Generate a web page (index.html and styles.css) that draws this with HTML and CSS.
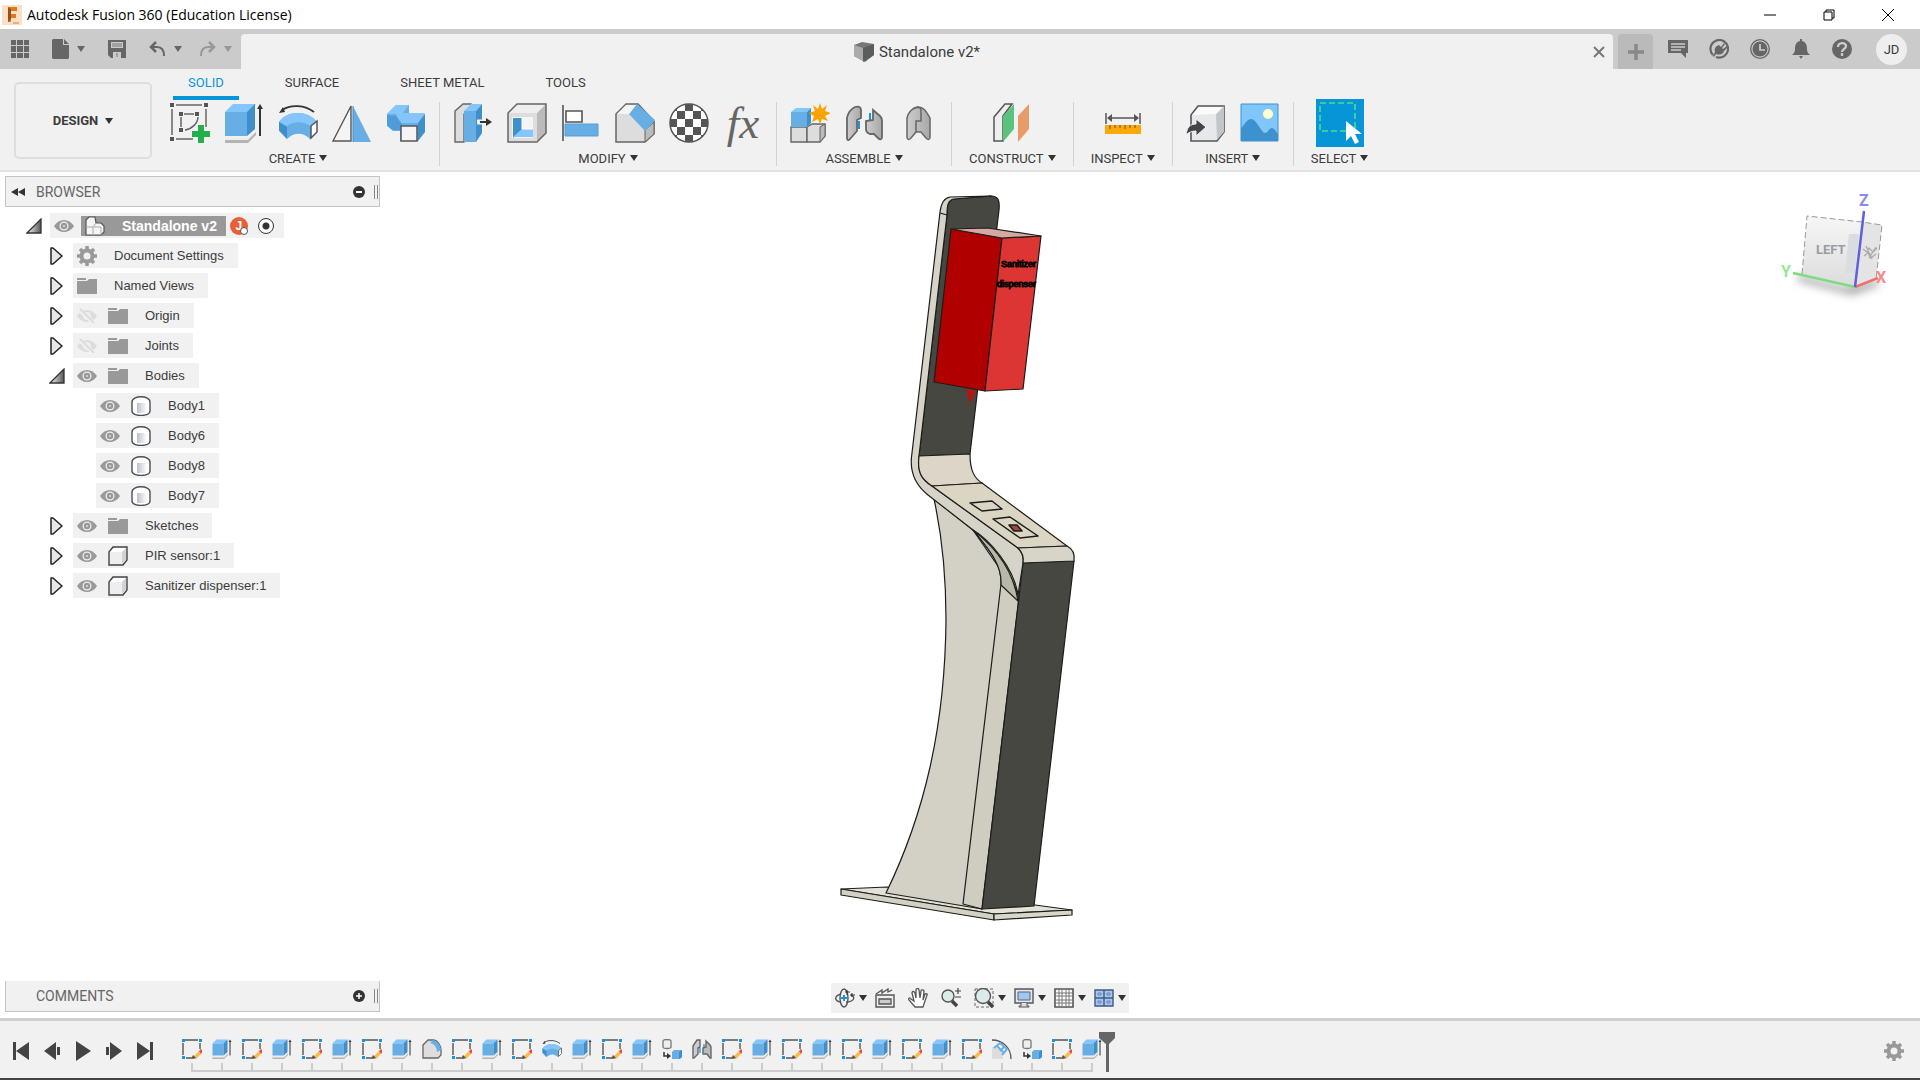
FILE: index.html
```html
<!DOCTYPE html>
<html lang="en">
<head>
    <meta charset="UTF-8">
    <meta name="viewport" content="width=device-width, initial-scale=1.0">
    <title>Autodesk Fusion 360 (Education License)</title>
    <link rel="stylesheet" href="styles.css">
</head>
<body>

    <!-- Icon sprite -->
    <svg class="sprite" aria-hidden="true">
        <defs>
            <linearGradient id="gradBody" x1="0" x2="1"><stop offset="0" stop-color="#bcc2ca"/><stop offset=".6" stop-color="#e4e7ea"/><stop offset="1" stop-color="#fff"/></linearGradient>
            <linearGradient id="gradTri" x1="0" x2="1"><stop offset="0" stop-color="#fff"/><stop offset="1" stop-color="#555"/></linearGradient>
            <linearGradient id="gradSteel" x1="0" x2="1"><stop offset="0" stop-color="#ccc"/><stop offset="1" stop-color="#a8a8a8"/></linearGradient>
            <pattern id="checks" width="16" height="16" patternUnits="userSpaceOnUse" x="0" y="0"><rect width="16" height="16" fill="#fff"/><rect width="8" height="8" fill="#555"/><rect x="8" y="8" width="8" height="8" fill="#555"/></pattern>
        </defs>

        <symbol id="i-sketch" viewBox="0 0 40 40">
            <path d="M6 2h26M2 6v26M6 36h17M36 6v18M14 11h10M11 14v10M15 27c7-1 13-7 13-13" fill="none" stroke="#666" stroke-width="1.5"/>
            <path d="M0 0h4v4H0zM34 0h4v4h-4zM0 34h4v4H0zM9 9h4v4H9zM25 9h4v4h-4zM9 25h4v4H9z" fill="#555"/>
            <path d="M28 22h6v6h6v6h-6v6h-6v-6h-6v-6h6z" fill="#22b04c"/>
        </symbol>
        <symbol id="i-extrude" viewBox="0 0 40 40">
            <path d="M1 35h23l8-8v5l-8 8H1z" fill="#b4b4b4"/><path d="M1 34h23l8-8v3l-8 8H1z" fill="#eee"/>
            <path d="M1 9l8-8h23l-8 8z" fill="#84c5fb"/><path d="M1 9h22v24H1z" fill="#67aee5"/><path d="M23 9l8-8v25l-8 7z" fill="#3f8fcb"/>
            <path d="M36 33V4" stroke="#333" stroke-width="2"/><path d="M33 6l3-5 3 5z" fill="#333"/>
        </symbol>
        <symbol id="i-revolve" viewBox="0 0 40 40">
            <path d="M1 19c8-12 29-12 38 0v10l-7 7c-7-7-16-7-23 0l-8-8z" fill="#67aee5"/><path d="M1 19c8-12 29-12 38 0l-7 4c-7-5-16-5-23 0z" fill="#84c5fb"/><path d="M1 19l8 5v12l-8-9z" fill="#3f8fcb"/>
            <path d="M33 23l6-5v11l-6 6z" fill="#fff" stroke="#555" stroke-width="1.5"/>
            <path d="M36 9C27 2 13 1 4 7" fill="none" stroke="#333" stroke-width="1.7"/><path d="M1 10l4-6 2 5z" fill="#333"/>
        </symbol>
        <symbol id="i-mirror" viewBox="0 0 40 40">
            <path d="M19 3v35H1z" fill="#f4f4f4" stroke="#555" stroke-width="1.4"/><path d="M21 3l18 36H21z" fill="#67aee5"/><path d="M21 3v36" stroke="#3f8fcb"/>
        </symbol>
        <symbol id="i-combine" viewBox="0 0 40 40">
            <path d="M1 11l9-9h13v9h16l-7 10v17H14V28H7l-6-5z" fill="#67aee5"/><path d="M1 11l9-9h13l-6 8h22l-7 10H14l-4-9z" fill="#84c5fb"/><path d="M32 20l7-9v18l-7 9z" fill="#3f8fcb"/><path d="M1 12l9 1 6 8-2 6H7l-6-5z" fill="#4f9cd8"/>
            <path d="M15 23h16v15H15z" fill="#f4f4f4" stroke="#555" stroke-width="1.5"/>
        </symbol>
        <symbol id="i-presspull" viewBox="0 0 40 40">
            <path d="M2 8l8-7h8v5l-7 5v28H2z" fill="#ddd" stroke="#666" stroke-width="1.4"/>
            <path d="M11 8l7-7h11l-6 7z" fill="#84c5fb"/><path d="M11 8h12v31H11z" fill="#67aee5"/><path d="M23 8l6-7v29l-6 9z" fill="#3f8fcb"/>
            <path d="M24 19h11" stroke="#f1f1f1" stroke-width="5"/><path d="M27 19h7" stroke="#333" stroke-width="2"/><path d="M33 15l6 4-6 4z" fill="#333"/>
        </symbol>
        <symbol id="i-shell" viewBox="0 0 40 40">
            <path d="M1 10l9-9h29l-9 9z" fill="#efefef"/><path d="M1 10h29v29H1z" fill="#ddd"/><path d="M30 10l9-9v29l-9 9z" fill="#bbb"/><path d="M1 10l9-9h29v29l-9 9H1z" fill="none" stroke="#666" stroke-width="1.5"/>
            <path d="M5 14h21v21H5z" fill="#f4f4f4"/><path d="M6 15h9v12l-9 8z" fill="#3f8fcb"/><path d="M6 34l9-8h11v8z" fill="#84c5fb"/><path d="M15 15v11h11" fill="none" stroke="#fff"/>
        </symbol>
        <symbol id="i-align" viewBox="0 0 40 40">
            <path d="M2 2v36" stroke="#555" stroke-width="1.6"/><path d="M5 8h16v11H5z" fill="#fff" stroke="#555" stroke-width="1.6"/><path d="M4 21h33v12H4z" fill="#67aee5" stroke="#539fd9"/>
        </symbol>
        <symbol id="i-chamfer" viewBox="0 0 40 40">
            <path d="M1 11l10-10h12l16 17v13l-9 8H1z" fill="#ddd" stroke="#666" stroke-width="1.5"/><path d="M30 27l9-8v12l-9 8z" fill="#bbb" stroke="#666"/><path d="M14 11l8-10 18 16-10 11z" fill="#67aee5"/><path d="M2 11l9-9h10l-7 9z" fill="#f4f4f4"/>
        </symbol>
        <symbol id="i-appearance" viewBox="0 0 40 40">
            <circle cx="20" cy="20" r="19" fill="url(#checks)" stroke="#555" stroke-width="1.5"/>
        </symbol>
        <symbol id="i-newcomp" viewBox="0 0 40 40">
            <path d="M1 24h16v15H1z" fill="#ddd" stroke="#666" stroke-width="1.4"/><path d="M17 24l5-3h13v12l-5 6H17z" fill="#ddd" stroke="#666" stroke-width="1.4"/><path d="M30 24l5-3v12l-5 6z" fill="#bbb" stroke="#666"/>
            <path d="M1 9l5-4h15l-4 4z" fill="#84c5fb"/><path d="M1 9h16v15H1z" fill="#67aee5"/><path d="M17 9l4-4v15l-4 4z" fill="#3f8fcb"/>
            <path d="M30 0l2 6 5-4-2 6 6 2-6 3 3 5-6-2-2 5-2-5-6 3 2-6-5-3 6-2-2-6 5 4z" fill="#f9a300"/>
        </symbol>
        <symbol id="i-joint" viewBox="0 0 40 40">
            <path d="M3 15c1-5 4-9 8-11 4-1 6 0 6 3v8l-4 2v11l-7 8c-2 2-3 1-3-1z" fill="url(#gradSteel)" stroke="#666" stroke-width="1.8"/><path d="M15 18v8M26 10v8" stroke="#1a93e6" stroke-width="2"/>
            <path d="M29 7l7 6c2 2 2 3 2 5v16c0 3-2 3-4 1l-4-4h-4c-3-1-4-3-4-5v-8l7-1z" fill="url(#gradSteel)" stroke="#666" stroke-width="1.8"/>
        </symbol>
        <symbol id="i-asbuilt" viewBox="0 0 40 40">
            <path d="M9 15c1-5 5-10 10-11 6-1 9 4 13 11v19c0 3-2 3-4 1l-5-6h-5l-5 6c-2 2-4 2-4-1z" fill="url(#gradSteel)" stroke="#666" stroke-width="1.5"/><path d="M18 29V18h5V7c0-3-4-3-8-1" fill="none" stroke="#666" stroke-width="1.5"/>
        </symbol>
        <symbol id="i-construct" viewBox="0 0 40 40">
            <path d="M2 14L13 1h7l-9 12v25H2z" fill="#eee" stroke="#555" stroke-width="1.5"/><path d="M11 13L22 1v25L11 39z" fill="#5ac37d"/><path d="M26 13L37 1v25L26 39z" fill="#e89a68"/>
        </symbol>
        <symbol id="i-inspect" viewBox="0 0 40 40">
            <path d="M3 10v11M37 10v11M5 15h30" stroke="#555" stroke-width="1.5"/><path d="M9 11l-5 4 5 4zM31 11l5 4-5 4z" fill="#555"/><path d="M2 22h36v9H2z" fill="#f9a90a"/><path d="M7 22v4M12 22v3M17 22v3M22 22v4M27 22v3M32 22v3" stroke="#765016"/>
        </symbol>
        <symbol id="i-insert" viewBox="0 0 40 40">
            <path d="M5 12l7-9h26v26l-7 9H5z" fill="#e6e8eb" stroke="#555" stroke-width="1.6"/><path d="M30 11l8-8v26l-7 8z" fill="#c2c5ca"/><path d="M6 12l7-8h24l-7 7z" fill="#fafafa"/><path d="M0 32c1-8 4-11 10-11v-5l10 8-10 9v-5c-4 0-7 1-10 4z" fill="#444" stroke="#f1f1f1"/>
        </symbol>
        <symbol id="i-canvas" viewBox="0 0 40 40">
            <path d="M1 1h37v37H1z" fill="#81c6fb" stroke="#3d91cf"/><path d="M1 26c4-6 7-10 10-10 6 0 10 14 14 14 3 0 4-5 7-5 2 0 4 4 6 6v7H1z" fill="#3d91cf"/><circle cx="28" cy="11" r="5" fill="#ffffce"/>
        </symbol>
        <symbol id="i-select" viewBox="0 0 48 48">
            <path d="M4 4h35v28H4z" fill="none" stroke="#4fdc8f" stroke-width="1.6" stroke-dasharray="6 3"/><path d="M30 22v20l5-5 4 8 4-2-4-8h7z" fill="#fff"/>
        </symbol>

        <symbol id="i-eye" viewBox="0 0 20 20"><path d="M0 10c5-8 15-8 20 0-5 8-15 8-20 0z" fill="#999"/><circle cx="10" cy="10" r="4.5" fill="#eee"/><circle cx="10" cy="10" r="3.2" fill="#999"/><circle cx="10" cy="10" r="1" fill="#ddd"/></symbol>
        <symbol id="i-eye-off" viewBox="0 0 20 20"><path d="M0 10c5-8 15-8 20 0-5 8-15 8-20 0z" fill="#ddd"/><circle cx="10" cy="10" r="4" fill="#eee"/><path d="M1 3l17 15" stroke="#f1f1f1" stroke-width="4"/><path d="M3 3l14 14" stroke="#ddd" stroke-width="2"/></symbol>
        <symbol id="i-folder" viewBox="0 0 20 20"><path d="M0 2h9v2H0zM0 5h10l2-2h8v15H0z" fill="#999"/></symbol>
        <symbol id="i-gear" viewBox="0 0 20 20"><g fill="none" stroke="#999"><circle cx="10" cy="10" r="5.5" stroke-width="4"/><path d="M10 0v4M10 16v4M0 10h4M16 10h4M3 3l3 3M14 14l3 3M17 3l-3 3M6 14l-3 3" stroke-width="3.5"/></g></symbol>
        <symbol id="i-body" viewBox="0 0 20 20"><path d="M1 6c0-7 18-7 18 0v9c0 6-18 6-18 0z" fill="#fff" stroke="#4a4f58" stroke-width="1.4"/><path d="M6 7h10v10H6z" fill="url(#gradBody)"/></symbol>
        <symbol id="i-cube" viewBox="0 0 20 20"><path d="M1 6l4-5h14v13l-4 5H1z" fill="#eceef0" stroke="#444" stroke-width="1.4"/><path d="M2 6l4-4h12l-4 4z" fill="#fff"/><path d="M14 6l4-4v12l-4 4z" fill="#cfd2d6"/></symbol>
        <symbol id="i-component" viewBox="0 0 20 20"><path d="M1 4l3-3h6l1 6h5l3 3v6l-3 3H1z" fill="#f3f4f6" stroke="#555" stroke-width="1.2"/><path d="M1 11h7l3-4M8 11v8M9 11h7v8" fill="none" stroke="#aaa"/></symbol>
        <symbol id="i-open" viewBox="0 0 16 16"><path d="M15 1v14H1z" fill="url(#gradTri)" stroke="#333" stroke-width="1.3"/></symbol>
        <symbol id="i-closed" viewBox="0 0 14 18"><path d="M2 1h2l9 8-9 8H2z" fill="#e8e8e8" stroke="#222" stroke-width="1.5" stroke-linejoin="round"/></symbol>

        <symbol id="t-sketch" viewBox="0 0 20 20"><path d="M3 1h13M1 4v12M4 19h7M18 4v6" fill="none" stroke="#555" stroke-width="1.4"/><path d="M0 0h3v3H0zM17 0h3v3h-3zM0 17h3v3H0z" fill="#1a93e6"/><path d="M11 18l6-6 2 3-5 5z" fill="#f9bd48"/><path d="M17 12l2-2 2 2-2 3z" fill="#f04755"/><path d="M10 18l1-2 3 3-3 1z" fill="#555"/></symbol>
        <symbol id="t-copy" viewBox="0 0 20 20"><path d="M1 2c0-2 8-2 8 0v6c0 2-8 2-8 0z" fill="#eee" stroke="#777" stroke-width="1.3"/><path d="M2 13v4h3" fill="none" stroke="#333" stroke-width="1.5"/><path d="M5 14l4 3-4 3z" fill="#333"/><path d="M10 13l2-2h8v7l-2 2h-8z" fill="#67aee5"/><path d="M17 13l3-2v7l-3 2z" fill="#3f8fcb"/></symbol>
        <symbol id="t-fillet" viewBox="0 0 20 20"><path d="M1 6l5-5h5c5 0 8 6 8 10v5l-3 3H1z" fill="#ddd" stroke="#666" stroke-width="1.3"/><path d="M8 4l3-3c5 1 8 6 8 10l-4 2c0-4-2-8-7-9z" fill="#67aee5"/></symbol>
        <symbol id="t-joint" viewBox="0 0 20 20"><path d="M1 7l4-6h3v7L6 9v6l-4 4H1z" fill="#ccc" stroke="#666" stroke-width="1.4"/><path d="M8 9v5M12 5v5" stroke="#1a93e6" stroke-width="1.3"/><path d="M14 2l4 4 1 2v11h-1l-3-4h-4V9l3-1z" fill="#bbb" stroke="#666" stroke-width="1.4"/></symbol>
        <symbol id="t-emboss" viewBox="0 0 20 20"><path d="M0 1c11 0 19 8 19 19" fill="none" stroke="#555" stroke-width="1.3"/><path d="M0 8c7 0 11 5 11 12H0z" fill="#ddd"/><path d="M2 9l6-5 7 6-5 6M5 7l6 6M8 12l4-4" fill="none" stroke="#67aee5" stroke-width="2"/></symbol>
    </svg>

    <header class="title-bar">
        <svg class="app-logo" viewBox="0 0 20 20"><path d="M0 0h20v20H0z" fill="#fbdfc9"/><path d="M6 2h9v4H9v3h5v4H9v4H6z" fill="#d87a20"/><path d="M6 2v15l3-3V4z" fill="#9b4f10"/><path d="M11 17h6v2h-6z" fill="#f3ae70"/></svg>
        <span class="app-name">Autodesk Fusion 360 (Education License)</span>
        <div class="window-controls">
            <button aria-label="Minimize"><svg viewBox="0 0 12 12"><path d="M0 6h12"/></svg></button>
            <button aria-label="Restore"><svg viewBox="0 0 12 12"><path d="M1 3h8v8H1zM3 3V1h8v8H9"/></svg></button>
            <button aria-label="Close"><svg viewBox="0 0 12 12"><path d="M0 0l12 12M12 0L0 12"/></svg></button>
        </div>
    </header>

    <div class="tab-bar">
        <div class="quick-access">
            <button aria-label="Data panel"><svg width="18" height="18" viewBox="0 0 18 18"><path d="M0 0h5v5H0zM6 0h6v5H6zM13 0h5v5h-5zM0 6h5v6H0zM6 6h6v6H6zM13 6h5v6h-5zM0 13h5v5H0zM6 13h6v5H6zM13 13h5v5h-5z" fill="#666"/></svg></button>
            <button class="with-arrow" aria-label="File"><svg width="17" height="20" viewBox="0 0 17 20"><path d="M1 0h10v6h6v13l-1 1H1l-1-1V1zM12 0l5 5h-5z" fill="#666"/></svg><span class="arrow"></span></button>
            <button aria-label="Save"><svg width="18" height="18" viewBox="0 0 18 18"><path d="M0 0h18v18H3l-3-3zM3 2v6h12V2zM5 12v6h8v-6z" fill="#666" fill-rule="evenodd"/><path d="M4 4h10M4 6h10M9 13v4" stroke="#777"/></svg></button>
            <button class="with-arrow" aria-label="Undo"><svg width="17" height="16" viewBox="0 0 17 16"><path d="M2 6h6c5 0 7 4 7 9" fill="none" stroke="#666" stroke-width="2"/><path d="M7 1L2 6l5 5" fill="none" stroke="#666" stroke-width="2.5"/></svg><span class="arrow"></span></button>
            <button class="with-arrow disabled" aria-label="Redo"><svg width="17" height="16" viewBox="0 0 17 16"><path d="M15 6H9c-5 0-7 4-7 9" fill="none" stroke="#666" stroke-width="2"/><path d="M10 1l5 5-5 5" fill="none" stroke="#666" stroke-width="2.5"/></svg><span class="arrow"></span></button>
        </div>
        <div class="document-tab">
            <div class="document-title">
                <svg width="20" height="20" viewBox="0 0 20 20"><path d="M0 3l8-3 12 2v11l-9 7-11-6z" fill="#777"/><path d="M0 3l9 3v13l-9-5z" fill="#aaa"/><path d="M9 6l11-4v11l-11 7z" fill="#5c5c5c"/></svg>
                <span>Standalone v2*</span>
            </div>
            <button class="close-tab" aria-label="Close tab"><svg width="12" height="12" viewBox="0 0 12 12"><path d="M1 1l10 10M11 1L1 11" stroke="#777" stroke-width="2"/></svg></button>
        </div>
        <button class="new-tab" aria-label="New tab"><svg width="16" height="16" viewBox="0 0 16 16"><path d="M8 0v16M0 8h16" stroke="#888" stroke-width="3.5"/></svg></button>
        <div class="account-tools">
            <button aria-label="Comments"><svg viewBox="0 0 20 20"><path d="M0 1h20v13h-2v5l-5-5H0z" fill="#666"/><path d="M3 5h14M3 8h14M3 11h10" stroke="#ccc" stroke-width="1.3"/></svg></button>
            <button aria-label="Extensions"><svg viewBox="0 0 20 20"><path d="M4 16a8.800 8.800 0 1 1 3 2" fill="none" stroke="#666" stroke-width="2.200"/><path d="M4 17l2-4c-1-4 1-6 4-7l2 2 3-4 1 1-3 4 1 1 4-3 1 1-4 4c-1 4-5 4-8 3l-2 3z" fill="#666"/></svg></button>
            <button aria-label="Job status"><svg viewBox="0 0 20 20"><circle cx="10" cy="10" r="9.3" fill="none" stroke="#666" stroke-width="1.3"/><circle cx="10" cy="10" r="7.5" fill="#666"/><path d="M10 5v6h5" fill="none" stroke="#ccc" stroke-width="1.7"/></svg></button>
            <button aria-label="Notifications"><svg viewBox="0 0 20 20"><path d="M9 0h2v2c4 1 5 4 5 8 0 3 1 4 3 6H1c2-2 3-3 3-6 0-4 1-7 5-8zM8 17h4l-2 3z" fill="#666"/></svg></button>
            <button aria-label="Help"><svg viewBox="0 0 20 20"><circle cx="10" cy="10" r="10" fill="#666"/><path d="M6 8c0-5 8-5 8-1 0 3-4 3-4 6M10 14v3" fill="none" stroke="#ccc" stroke-width="2.3"/></svg></button>
            <button class="avatar">JD</button>
        </div>
    </div>

    <!-- Ribbon -->
    <div class="toolbar">
        <button class="workspace-button">DESIGN <span class="arrow"></span></button>
        <div class="ribbon">
            <nav class="ribbon-tabs">
                <button class="active">SOLID</button>
                <button>SURFACE</button>
                <button>SHEET METAL</button>
                <button>TOOLS</button>
            </nav>
            <div class="tool-groups">
                <div class="tool-group">
                    <div class="tools">
                        <button aria-label="Create sketch"><svg><use href="#i-sketch"/></svg></button>
                        <button aria-label="Extrude"><svg><use href="#i-extrude"/></svg></button>
                        <button aria-label="Revolve"><svg><use href="#i-revolve"/></svg></button>
                        <button aria-label="Mirror"><svg><use href="#i-mirror"/></svg></button>
                        <button aria-label="Combine"><svg><use href="#i-combine"/></svg></button>
                    </div>
                    <button class="group-label">CREATE <span class="arrow"></span></button>
                </div>
                <div class="tool-group">
                    <div class="tools">
                        <button aria-label="Press pull"><svg><use href="#i-presspull"/></svg></button>
                        <button aria-label="Shell"><svg><use href="#i-shell"/></svg></button>
                        <button aria-label="Align"><svg><use href="#i-align"/></svg></button>
                        <button aria-label="Chamfer"><svg><use href="#i-chamfer"/></svg></button>
                        <button aria-label="Appearance"><svg><use href="#i-appearance"/></svg></button>
                        <button class="fx-tool">fx</button>
                    </div>
                    <button class="group-label">MODIFY <span class="arrow"></span></button>
                </div>
                <div class="tool-group">
                    <div class="tools">
                        <button aria-label="New component"><svg><use href="#i-newcomp"/></svg></button>
                        <button aria-label="Joint"><svg><use href="#i-joint"/></svg></button>
                        <button aria-label="As-built joint"><svg><use href="#i-asbuilt"/></svg></button>
                    </div>
                    <button class="group-label">ASSEMBLE <span class="arrow"></span></button>
                </div>
                <div class="tool-group">
                    <div class="tools"><button aria-label="Offset plane"><svg><use href="#i-construct"/></svg></button></div>
                    <button class="group-label">CONSTRUCT <span class="arrow"></span></button>
                </div>
                <div class="tool-group">
                    <div class="tools"><button aria-label="Measure"><svg><use href="#i-inspect"/></svg></button></div>
                    <button class="group-label">INSPECT <span class="arrow"></span></button>
                </div>
                <div class="tool-group">
                    <div class="tools">
                        <button aria-label="Insert derive"><svg><use href="#i-insert"/></svg></button>
                        <button aria-label="Canvas"><svg><use href="#i-canvas"/></svg></button>
                    </div>
                    <button class="group-label">INSERT <span class="arrow"></span></button>
                </div>
                <div class="tool-group">
                    <div class="tools"><button class="select-tool" aria-label="Select"><svg><use href="#i-select"/></svg></button></div>
                    <button class="group-label">SELECT <span class="arrow"></span></button>
                </div>
            </div>
        </div>
    </div>

    <main class="workspace">
        <aside class="browser">
            <div class="panel-header">
                <svg class="collapse" width="14" height="8" viewBox="0 0 14 8"><path d="M7 0v8L0 4zM14 0v8L7 4z" fill="#333"/></svg>
                <span>BROWSER</span>
                <button class="panel-button" aria-label="Hide"><svg width="12" height="12" viewBox="0 0 12 12"><circle cx="6" cy="6" r="6" fill="#333"/><path d="M3 6h6" stroke="#fff" stroke-width="2"/></svg></button>
                <span class="grip"></span>
            </div>
            <ul class="tree" id="tree"></ul>
        </aside>

        <!-- 3D model -->
        <svg class="model" viewBox="0 0 280 750" stroke="#1c1c1a" stroke-width="1.2" stroke-linejoin="round">
            <path d="M21 709L67 707L215 725L252 730L174 734z" fill="#e4e2d6"/>
            <path d="M21 709L174 734V740L21 715z" fill="#d3d1c4"/>
            <path d="M174 734L252 730V735L174 740z" fill="#d9d7ca"/>
            <path d="M114 319C123 360 126 400 126 440C125 548 104 635 66 713L162 729L198 415L153 350z" fill="#d3d1c5"/>
            <path d="M157 353C172 373 182 386 181 404L143 724L162 729L199 418C190 388 174 371 157 353z" fill="#cfcdc0"/>
            <path d="M203 383L254 381L214 726L162 729z" fill="#474742"/>
            <path d="M127 35C127 25 128 20 134 19L171 16C178 16 180 20 179 30L150 274L99 276z" fill="#474742"/>
            <path d="M120 32C121 24 124 18 130 17L171 16L134 19C128 20 127 25 127 35L99 276C97 292 102 299 112 306L198 368C202 372 204 377 203 383L198 415C194 388 170 360 153 350L108 315C94 304 89 291 92 273z" fill="#d6d4c8"/>
            <path d="M153 350C172 373 182 386 181 405L198 421C193 388 174 366 153 350z" fill="#b8b8aa"/>
            <path d="M120 33L127 35" fill="none"/>
            <path d="M99 276L150 274C150 290 154 298 162 303L112 306C101 299 97 292 99 276z" fill="#ddd6c8"/>
            <path d="M112 306L162 303L247 366L198 368z" fill="#dbd5c4"/>
            <path d="M198 368L247 366C253 369 255 374 254 381L203 383C204 377 202 372 198 368z" fill="#d7d5c7"/>
            <path d="M150 323L172 321L182 329L162 331zM173 339L190 337L218 356L200 358z" fill="none" stroke-width="1.5"/>
            <path d="M189 345h8l5 6h-8z" fill="#9b4a43" stroke-width="1.6"/>
            <path d="M146 209L156 211L150 224z" fill="#b31512" stroke="none"/>
            <path d="M131 49L182 58L165 211L114 202z" fill="#b10000"/>
            <path d="M182 58L221 56L203 209L165 211z" fill="#dd3533"/>
            <path d="M131 49L168 48L221 56L182 58z" fill="#d6a8a2"/>
            <text class="model-text" x="181" y="87">Sanitizer</text>
            <text class="model-text" x="177" y="107">dispenser</text>
        </svg>

        <!-- View cube -->
        <svg class="view-cube" viewBox="0 0 180 150">
            <defs>
                <filter id="soft" x="-20%" y="-100%" width="140%" height="300%"><feGaussianBlur stdDeviation="4"/></filter>
                <linearGradient id="gradCube" x2="0" y2="1"><stop offset="0" stop-color="#f6f6f6"/><stop offset="1" stop-color="#dcdcdc"/></linearGradient>
            </defs>
            <path d="M58 108L105 120L138 113L112 122z" stroke="#aaa" stroke-width="6" fill="#999" filter="url(#soft)"/>
            <path d="M67 46L122 52L115 117L62 104z" fill="url(#gradCube)"/>
            <path d="M122 52L142 55L136 110L115 117z" fill="#e4e4e4"/>
            <path d="M109 64h10l-4 39h-10z" fill="#d9dce0"/>
            <path d="M62 104L67 46L122 52L142 55L136 110" fill="none" stroke="#999" stroke-dasharray="6 3"/>
            <text class="cube-face" x="76" y="84">LEFT</text>
            <path d="M123 79l4 3 2-4 4 4 4-4M124 86l4-3 3 5 5-4M126 76l6 13M136 77l-7 11" fill="none" stroke="#aaa" stroke-width="1.3"/>
            <path d="M53 103L115 117" stroke="#7ddb82" stroke-width="2.5"/>
            <path d="M115 117L138 108" stroke="#f07070" stroke-width="2.5"/>
            <path d="M124 41L115 117" stroke="#5f5fe0" stroke-width="2.5"/>
            <text class="axis axis-z" x="119" y="36">Z</text>
            <text class="axis axis-y" x="41" y="107">Y</text>
            <text class="axis axis-x" x="136" y="113">X</text>
        </svg>

        <div class="panel-header comments">
            <span>COMMENTS</span>
            <button class="panel-button" aria-label="Show"><svg width="12" height="12" viewBox="0 0 12 12"><circle cx="6" cy="6" r="6" fill="#333"/><path d="M3 6h6M6 3v6" stroke="#fff" stroke-width="1.5"/></svg></button>
            <span class="grip"></span>
        </div>

        <div class="nav-bar">
            <button class="with-arrow" aria-label="Orbit"><svg viewBox="0 0 20 20"><g fill="none" stroke="#555" stroke-width="1.4"><ellipse cx="9" cy="10" rx="4" ry="9"/><path d="M6 6C-1 8-1 13 6 14M11 14c8 0 10-5 5-7"/></g><path d="M9 7v6M6 10h6" stroke="#1a93e6" stroke-width="2"/><path d="M12 2v5M10 4h5M17 5v4M15 7h5" stroke="#333"/></svg><span class="arrow"></span></button>
            <button aria-label="Look at"><svg viewBox="0 0 20 20"><path d="M1 7h18v12H1z" fill="#eee" stroke="#555" stroke-width="1.4"/><path d="M4 11h12v5H4z" fill="#ccc" stroke="#555" stroke-width="1.3"/><path d="M1 6l6-4v3l6-4v3l4-2" fill="none" stroke="#555" stroke-width="1.3"/></svg></button>
            <button aria-label="Pan"><svg viewBox="0 0 20 20"><path d="M7 19L1 12c-1-2 1-3 2-1l3 2L4 5c0-2 2-2 3 0l1 5V2c0-2 3-2 3 0l1 8 1-7c0-2 3-1 3 0l-1 9 2-6c1-1 3 0 2 1l-3 9-1 3z" fill="#fff" stroke="#555" stroke-width="1.3"/></svg></button>
            <button aria-label="Zoom"><svg viewBox="0 0 20 20"><circle cx="7" cy="8" r="6" fill="#dceaea" stroke="#555" stroke-width="1.4"/><path d="M11 13l5 5" stroke="#444" stroke-width="3.5"/><path d="M14 3h6M17 0v6M14 9h6" stroke="#444" stroke-width="1.2"/></svg></button>
            <button class="with-arrow" aria-label="Zoom window"><svg viewBox="0 0 20 20"><path d="M1 1h18v18H1z" fill="none" stroke="#666" stroke-dasharray="3 2"/><circle cx="9" cy="8" r="7.5" fill="#dceaea" stroke="#555" stroke-width="1.4"/><path d="M14 14l5 5" stroke="#444" stroke-width="3.5"/></svg><span class="arrow"></span></button>
            <button class="with-arrow" aria-label="Display settings"><svg viewBox="0 0 20 20"><path d="M1 1h18v14H1z" fill="#e6e6e6" stroke="#555" stroke-width="1.4"/><path d="M4 4h12v8H4z" fill="#a7c6ee" stroke="#4a6691"/><path d="M7 15v3H5v1h10v-1h-2v-3" fill="#ddd" stroke="#555"/></svg><span class="arrow"></span></button>
            <button class="with-arrow" aria-label="Grid and snaps"><svg viewBox="0 0 20 20"><path d="M1 1h18v18H1z" fill="#fff" stroke="#555" stroke-width="1.6"/><path d="M5 1v18M8 1v18M12 1v18M15 1v18M1 5h18M1 8h18M1 12h18M1 15h18" stroke="#777"/></svg><span class="arrow"></span></button>
            <button class="with-arrow" aria-label="Viewports"><svg viewBox="0 0 20 20"><g fill="#a7c6ee" stroke="#3f5985" stroke-width="1.4"><path d="M1 2h9v8H1zM10 2h9v8h-9zM1 10h9v8H1zM10 10h9v8h-9z"/></g><path d="M4 5h3v2H4zM13 5h3v2h-3zM4 13h3v2H4zM13 13h3v2h-3z" fill="none" stroke="#6686b8"/></svg><span class="arrow"></span></button>
        </div>
    </main>

    <footer class="timeline-bar">
        <div class="playback">
            <button aria-label="Go to start"><svg viewBox="0 0 16 20"><path d="M0 1h3v18H0zM16 1v18L3 10z"/></svg></button>
            <button aria-label="Step back"><svg viewBox="0 0 16 20"><path d="M12 1v18L0 10zM13 6h3v8h-3z"/></svg></button>
            <button aria-label="Play"><svg viewBox="0 0 16 20"><path d="M1 0v20l15-10z"/></svg></button>
            <button aria-label="Step forward"><svg viewBox="0 0 16 20"><path d="M4 1v18l12-9zM0 6h3v8H0z"/></svg></button>
            <button aria-label="Go to end"><svg viewBox="0 0 16 20"><path d="M13 1h3v18h-3zM0 1v18l13-9z"/></svg></button>
        </div>
        <div class="timeline" id="timeline"></div>
        <svg class="marker" viewBox="0 0 16 40"><path d="M0 0h16v6l-6 6v28H7V12L0 6z" fill="#666"/></svg>
        <button class="timeline-settings" aria-label="Timeline settings"><svg width="20" height="20"><use href="#i-gear"/></svg></button>
    </footer>

    <script>
        const nodes = [
            { name: "Document Settings", level: 1, toggle: "closed", icons: ["gear"] },
            { name: "Named Views", level: 1, toggle: "closed", icons: ["folder"] },
            { name: "Origin", level: 1, toggle: "closed", icons: ["eye-off", "folder"] },
            { name: "Joints", level: 1, toggle: "closed", icons: ["eye-off", "folder"] },
            { name: "Bodies", level: 1, toggle: "open", icons: ["eye", "folder"] },
            { name: "Body1", level: 2, icons: ["eye", "body"] },
            { name: "Body6", level: 2, icons: ["eye", "body"] },
            { name: "Body8", level: 2, icons: ["eye", "body"] },
            { name: "Body7", level: 2, icons: ["eye", "body"] },
            { name: "Sketches", level: 1, toggle: "closed", icons: ["eye", "folder"] },
            { name: "PIR sensor:1", level: 1, toggle: "closed", icons: ["eye", "cube"] },
            { name: "Sanitizer dispenser:1", level: 1, toggle: "closed", icons: ["eye", "cube"] }
        ];

        const icon = name => `<svg class="node-icon"><use href="#i-${name}"/></svg>`;
        const toggle = state => `<span class="toggle">${state ? `<svg class="toggle-${state}"><use href="#i-${state}"/></svg>` : ""}</span>`;

        document.getElementById("tree").innerHTML = `
            <li class="node level-0">
                ${toggle("open")}
                <div class="chip root">
                    ${icon("eye")}
                    <span class="selected">${icon("component")}<span>Standalone v2</span></span>
                    <span class="user-badge">J</span>
                    <input type="radio" checked aria-label="Activate component">
                </div>
            </li>` + nodes.map(node => `
            <li class="node level-${node.level}">
                ${toggle(node.toggle)}
                <div class="chip">${node.icons.map(icon).join("")}<span class="node-name">${node.name}</span></div>
            </li>`).join("");

        // s = sketch, e = extrude, f = fillet, r = revolve, c = copy, j = joint, m = emboss
        const features = "sesesesefsesresecjsesesesesmcse";
        const featureIcons = { s: "t-sketch", e: "i-extrude", f: "t-fillet", r: "i-revolve", c: "t-copy", j: "t-joint", m: "t-emboss" };

        document.getElementById("timeline").innerHTML = [...features].map(f =>
            `<button class="feature"><svg><use href="#${featureIcons[f]}"/></svg></button>`
        ).join("");
    </script>

</body>
</html>
```
FILE: styles.css
```css
/* General Styling */
* {
    box-sizing: border-box;
}

body {
    display: flex;
    flex-direction: column;
    height: 100vh;
    margin: 0;
    overflow: hidden;
    background: white;
    color: #3c3c3c;
    font-family: Roboto, "Liberation Sans", sans-serif;
    font-size: 13px;
}

button {
    display: flex;
    align-items: center;
    justify-content: center;
    padding: 0;
    border: none;
    background: none;
    color: inherit;
    font: inherit;
}

svg {
    display: block;
    flex: none;
}

.sprite {
    position: absolute;
    width: 0;
    height: 0;
}

.arrow {
    border: 4px solid transparent;
    border-top: 6px solid #333;
    border-bottom: none;
}

/* Title bar */
.title-bar {
    display: flex;
    align-items: center;
    flex: none;
    height: 29px;
    padding-left: 2px;
    color: black;
}

.app-logo {
    width: 20px;
    height: 20px;
}

.app-name {
    margin-left: 5px;
    font-family: "Open Sans", sans-serif;
    font-size: 14px;
}

.window-controls {
    display: flex;
    margin-left: auto;
    padding-right: 3px;
}

.window-controls button {
    width: 59px;
    height: 29px;
}

.window-controls svg {
    width: 12px;
    height: 12px;
    fill: none;
    stroke: black;
}

/* Document tabs */
.tab-bar {
    display: flex;
    flex: none;
    height: 40px;
    padding-top: 5px;
    background: #cbcbcb;
}

.quick-access {
    display: flex;
    align-items: center;
    gap: 23px;
    width: 241px;
    padding: 0 0 5px 11px;
}

.with-arrow {
    gap: 8px;
}

.quick-access .arrow {
    border-top-color: #666;
}

.quick-access .disabled {
    margin-left: -6px;
    opacity: 0.5;
}

.document-tab {
    display: flex;
    align-items: center;
    flex: 1;
    padding-right: 8px;
    border-radius: 4px 4px 0 0;
    background: #f1f1f1;
}

.document-title {
    display: flex;
    align-items: center;
    justify-content: center;
    flex: 1;
    gap: 5px;
    font-size: 15px;
}

.new-tab {
    width: 35px;
    margin-left: 5px;
    border-radius: 4px 4px 0 0;
    background: #bababa;
}

.account-tools {
    display: flex;
    align-items: center;
    gap: 21px;
    padding: 0 13px 5px 15px;
}

.account-tools svg {
    width: 20px;
    height: 20px;
}

.avatar {
    width: 31px;
    height: 31px;
    margin-left: 3px;
    border-radius: 50%;
    background: #eee;
}

/* Ribbon */
.toolbar {
    display: flex;
    flex: none;
    height: 103px;
    border-bottom: 2px solid #e3e3e3;
    background: #f1f1f1;
}

.workspace-button {
    gap: 7px;
    width: 138px;
    height: 77px;
    margin: 13px 11px 0 14px;
    border: 2px solid #dedede;
    border-radius: 5px;
    font-weight: bold;
}

.ribbon-tabs {
    display: flex;
    gap: 31px;
    margin-left: 10px;
}

.ribbon-tabs button {
    height: 31px;
    padding: 0 15px;
    border-bottom: 4px solid transparent;
}

.ribbon-tabs .active {
    border-bottom-color: #0696d7;
    color: #0696d7;
}

.tool-groups {
    display: flex;
    margin-top: 2px;
}

.tool-group {
    display: flex;
    flex-direction: column;
    align-items: center;
    justify-content: space-between;
    height: 64px;
    padding: 0 6px;
    border-right: 1px solid #d2d2d2;
}

.tool-group:first-child {
    padding-left: 0;
}

.tool-group:last-child {
    border-right: none;
}

.tools {
    display: flex;
    height: 42px;
}

.tools button {
    width: 54px;
    height: 42px;
}

.tools svg {
    width: 40px;
    height: 40px;
}

.tools .fx-tool {
    font-family: "Liberation Serif", serif;
    font-size: 45px;
    font-style: italic;
    color: #666;
}

.tools .select-tool {
    width: 48px;
    height: 48px;
    margin-top: -3px;
    background: #0696d7;
}

.tools .select-tool svg {
    width: 48px;
    height: 48px;
}

.group-label {
    gap: 4px;
    height: 16px;
    padding: 0 11px;
}

/* Workspace */
.workspace {
    position: relative;
    flex: 1;
    min-height: 0;
    padding: 4px 5px;
}

.browser {
    width: 375px;
}

.panel-header {
    display: flex;
    align-items: center;
    width: 375px;
    height: 31px;
    padding: 0 1px 0 5px;
    border: 1px solid #c4c4c4;
    background: #f1f1f1;
    color: #666;
    font-size: 14px;
}

.collapse {
    margin-right: 11px;
}

.panel-button {
    margin-left: auto;
}

.grip {
    width: 4px;
    height: 14px;
    margin-left: 9px;
    border: 1px solid #888;
    border-width: 0 1px;
}

.comments {
    position: absolute;
    bottom: 6px;
    left: 5px;
    padding-left: 30px;
    border-top: none;
}

/* Browser tree */
.tree {
    margin: 6px 0 0;
    padding: 0;
    list-style: none;
    font-family: "Liberation Sans", sans-serif;
}

.node {
    display: flex;
    align-items: center;
    margin-bottom: 5px;
}

.level-0 { padding-left: 21px; }
.level-1 { padding-left: 44px; }
.level-2 { padding-left: 66px; }

.toggle {
    width: 24px;
}

.level-2 .toggle {
    width: 25px;
}

.toggle-open {
    width: 16px;
    height: 16px;
}

.toggle-closed {
    width: 14px;
    height: 18px;
}

.chip {
    display: flex;
    align-items: center;
    gap: 11px;
    height: 25px;
    padding: 0 14px 0 4px;
    background: #f1f1f1;
}

.node-icon {
    width: 20px;
    height: 20px;
}

.node-name {
    margin-left: 6px;
}

.root {
    gap: 4px;
    padding-right: 10px;
}

.selected {
    display: flex;
    align-items: center;
    gap: 17px;
    height: 20px;
    margin-left: 3px;
    padding: 0 9px 0 4px;
    background: #999;
    color: white;
    font-size: 14px;
    font-weight: bold;
}

.user-badge {
    position: relative;
    width: 18px;
    height: 18px;
    border-radius: 50%;
    background: #e8603a;
    color: white;
    font-size: 12px;
    font-weight: bold;
    line-height: 18px;
    text-align: center;
}

.user-badge::after {
    content: "";
    position: absolute;
    right: 0;
    bottom: 0;
    width: 6px;
    height: 6px;
    border: 1px solid #555;
    border-radius: 50%;
    background: white;
}

.root input {
    appearance: none;
    width: 16px;
    height: 16px;
    margin: 0 0 0 6px;
    border: 1px solid #333;
    border-radius: 50%;
    background: radial-gradient(#333 3px, #fff 4px);
}

/* Canvas content */
.model {
    position: absolute;
    top: 8px;
    left: calc(50% - 140px);
    width: 280px;
    height: 750px;
}

.model-text {
    font-family: "Liberation Sans", sans-serif;
    font-size: 9px;
    fill: black;
    stroke: black;
    stroke-width: 1px;
}

.view-cube {
    position: absolute;
    top: -2px;
    right: 0;
    width: 180px;
    height: 150px;
}

.cube-face {
    font-size: 13px;
    font-weight: bold;
    fill: #999da3;
}

.axis {
    font-size: 16px;
    font-weight: bold;
}

.axis-x { fill: #f58a8a; }
.axis-y { fill: #93e897; }
.axis-z { fill: #8a8af5; }

/* Navigation bar */
.nav-bar {
    position: absolute;
    bottom: 5px;
    left: calc(50% - 129px);
    display: flex;
    align-items: center;
    gap: 13px;
    height: 30px;
    padding: 0 8px 0 4px;
    background: #f1f1f1;
}

.nav-bar svg {
    width: 20px;
    height: 20px;
}

.nav-bar .with-arrow {
    gap: 4px;
    margin-right: -5px;
}

/* Timeline */
.timeline-bar {
    display: flex;
    align-items: flex-start;
    flex: none;
    height: 62px;
    border-top: 3px solid #cfcfcf;
    border-bottom: 2px solid #444;
    background: #f1f1f1;
}

.playback {
    display: flex;
    gap: 15px;
    padding: 20px 24px 0 13px;
}

.playback svg {
    width: 16px;
    height: 20px;
    fill: #444;
}

.timeline {
    display: flex;
    padding-top: 18px;
}

.feature {
    flex-direction: column;
    justify-content: flex-start;
    width: 30px;
    height: 33px;
    background: linear-gradient(#ccc, #ccc) bottom / 100% 2px no-repeat;
}

/* the rail runs from the middle of the first feature to the middle of the last */
.feature:first-child {
    background-position: right bottom;
    background-size: 16px 2px;
}

.feature:last-child {
    background-position: left bottom;
    background-size: 16px 2px;
}

.feature svg {
    width: 20px;
    height: 20px;
}

.feature::after {
    content: "";
    width: 2px;
    height: 7px;
    margin-top: 4px;
    background: #ccc;
}

.marker {
    width: 16px;
    height: 40px;
    margin: 11px 0 0 -8px;
}

.timeline-settings {
    margin: 20px 16px 0 auto;
}
```
